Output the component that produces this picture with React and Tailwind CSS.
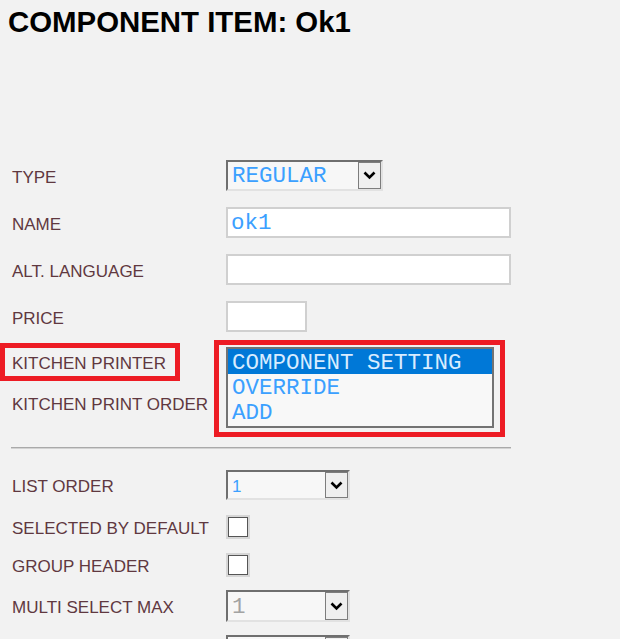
import React from 'react';

const labelCls = "text-[17px] text-[#603840] font-['Liberation_Sans',Arial,sans-serif] leading-normal";
const monoCls = "font-['Liberation_Mono','Courier_New',monospace] text-[22.5px] leading-none";

const Chevron = () => (
  <svg width="13" height="9" viewBox="0 0 13 9">
    <polyline points="1.5,1.5 6.5,6.5 11.5,1.5" fill="none" stroke="#000" strokeWidth="2.6" />
  </svg>
);

const Select = ({ value, width, height = 31, muted, sans }) => (
  <div
    className="flex border-2 border-t-[#6f6f6f] border-l-[#6f6f6f] border-r-[#e2e2e2] border-b-[#e2e2e2] bg-[#f7f7f7]"
    style={{ width, height }}
  >
    <span
      className={`flex flex-1 items-center pl-[4px] pt-[2px] ${
        sans ? "font-['Liberation_Sans',Arial,sans-serif] text-[17px] leading-none" : monoCls
      } ${muted ? 'text-[#a3a3a3]' : 'text-[#3ba0ff]'}`}
    >
      {value}
    </span>
    <span className="flex w-[23px] items-center justify-center border border-[#7d7d7d] bg-[#efefef]">
      <Chevron />
    </span>
  </div>
);

const TextInput = ({ value, width }) => (
  <div
    className={`flex h-[31px] items-center border-2 border-[#d0d0d0] bg-white pl-[3px] pt-[2px] text-[#3ba0ff] ${monoCls}`}
    style={{ width }}
  >
    {value}
  </div>
);

const Checkbox = () => (
  <div className="h-[24px] w-[24px] bg-[#d6d6d6] p-[2px]">
    <div className="h-full w-full border border-[#555] bg-white" />
  </div>
);

const Row = ({ label, h, children }) => (
  <div className="flex items-center" style={{ height: h }}>
    <div className={`w-[226px] shrink-0 pl-[12px] pt-[4px] ${labelCls}`}>{label}</div>
    {children}
  </div>
);

export default function App() {
  return (
    <div className="min-h-screen w-[620px] overflow-hidden bg-[#f2f2f2]">
      {/* Header */}
      <div className="h-[152px] pl-[8px] pt-[7px]">
        <h1 className="font-['Liberation_Sans',Arial,sans-serif] text-[29.4px] font-bold leading-none text-black">
          COMPONENT ITEM: Ok1
        </h1>
      </div>

      {/* Main fields */}
      <Row label="TYPE" h={47}>
        <Select value="REGULAR" width={157} />
      </Row>
      <Row label="NAME" h={47}>
        <TextInput value="ok1" width={285} />
      </Row>
      <Row label="ALT. LANGUAGE" h={47}>
        <TextInput value="" width={285} />
      </Row>
      <Row label="PRICE" h={47}>
        <TextInput value="" width={81} />
      </Row>

      {/* Kitchen printer block */}
      <div className="flex">
        <div className="w-[214px] shrink-0">
          <div className={`mt-[3px] flex h-[38px] w-[180px] items-center border-[5px] border-[#ed1c24] pl-[7px] pt-[4px] ${labelCls}`}>
            KITCHEN PRINTER
          </div>
          <div className={`flex h-[44px] items-center pl-[12px] pt-[4px] ${labelCls}`}>KITCHEN PRINT ORDER</div>
        </div>
        <div className="h-[97px] w-[291px] border-[5px] border-[#ed1c24] pb-[4px] pl-[7px] pr-[6px] pt-[2px]">
          <div className={`h-[81px] w-[268px] border-2 border-[#737373] bg-[#f8f8f8] ${monoCls}`}>
            <div className="flex h-[25px] items-center bg-[#0078d7] pl-[4px] pt-[3px] text-[#d8ecff]">COMPONENT SETTING</div>
            <div className="flex h-[25px] items-center pl-[4px] pt-[3px] text-[#3ba0ff]">OVERRIDE</div>
            <div className="flex h-[25px] items-center pl-[4px] pt-[3px] text-[#3ba0ff]">ADD</div>
          </div>
        </div>
      </div>

      <div className="ml-[11px] mt-[10px] h-[2px] w-[500px] border-t border-b border-t-[#aaaaaa] border-b-[#d3d3d3]" />

      {/* Options */}
      <div className="mt-[15px]">
        <Row label="LIST ORDER" h={42}>
          <Select value="1" width={124} height={30} sans />
        </Row>
        <Row label="SELECTED BY DEFAULT" h={42}>
          <Checkbox />
        </Row>
        <Row label="GROUP HEADER" h={34}>
          <Checkbox />
        </Row>
        <Row label="MULTI SELECT MAX" h={48}>
          <Select value="1" width={124} height={32} muted />
        </Row>
        <Row label="" h={40}>
          <Select value="" width={124} height={30} muted />
        </Row>
      </div>
    </div>
  );
}
